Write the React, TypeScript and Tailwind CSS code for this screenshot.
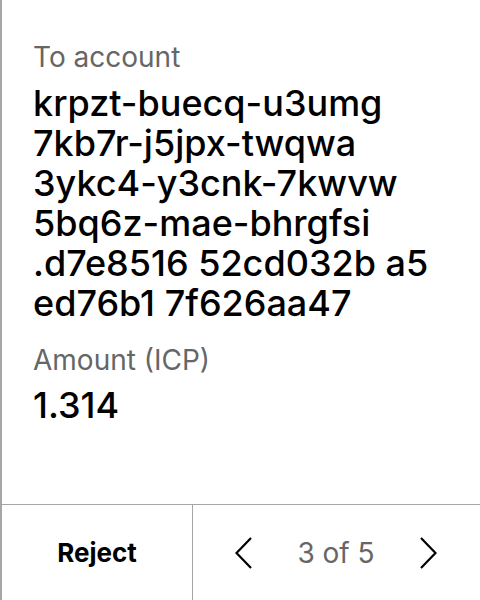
export default function App() {
  const lines = [
    "krpzt-buecq-u3umg",
    "7kb7r-j5jpx-twqwa",
    "3ykc4-y3cnk-7kwvw",
    "5bq6z-mae-bhrgfsi",
    ".d7e8516 52cd032b a5",
    "ed76b1 7f626aa47",
  ];

  return (
    <div className="h-[600px] w-[480px] bg-white border-l-2 border-[#a6a6a6] flex flex-col font-['Inter',sans-serif]">
      <div className="flex-1 pl-[31px] pt-[41px]">
        <div className="text-[28px] leading-[32px] text-[#666666]">To account</div>
        <div className="mt-[10px] text-[36px] leading-[40px] font-medium text-black">
          {lines.map((l) => (
            <div key={l}>{l}</div>
          ))}
        </div>
        <div className="mt-[21px] text-[28px] leading-[32px] text-[#666666]">Amount (ICP)</div>
        <div className="mt-[9px] text-[36px] leading-[40px] font-medium text-black">1.314</div>
      </div>

      <div className="h-[96px] border-t border-[#a6a6a6] flex">
        <div className="w-[191px] border-r border-[#a6a6a6] flex items-center justify-center">
          <span className="text-[26px] font-bold text-black">Reject</span>
        </div>
        <div className="flex-1 flex items-center justify-between pl-[42px] pr-[43px]">
          <svg width="17" height="32" viewBox="0 0 17 32" fill="none">
            <polyline points="16,1 1.5,16 16,31" stroke="black" strokeWidth="2.2" />
          </svg>
          <span className="text-[28px] text-[#666666]">3 of 5</span>
          <svg width="17" height="32" viewBox="0 0 17 32" fill="none">
            <polyline points="1,1 15.5,16 1,31" stroke="black" strokeWidth="2.2" />
          </svg>
        </div>
      </div>
    </div>
  );
}
